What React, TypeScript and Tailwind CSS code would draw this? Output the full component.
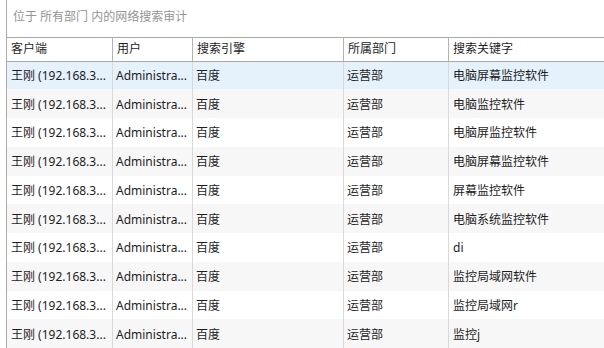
const keywords = [
  "电脑屏幕监控软件",
  "电脑监控软件",
  "电脑屏监控软件",
  "电脑屏幕监控软件",
  "屏幕监控软件",
  "电脑系统监控软件",
  "di",
  "监控局域网软件",
  "监控局域网r",
  "监控j",
];

const App = () => {
  return (
    <div className="w-[604px] h-[348px] overflow-hidden bg-white flex text-[12px] text-[#1e1e1e] font-['Segoe_UI','Noto_Sans','Noto_Sans_CJK_SC',sans-serif]">
      <div className="w-[6px] shrink-0" />
      <div className="flex-1 flex flex-col border-l border-[#ababab]">
        <div className="h-[37px] flex items-center pl-[6px] pb-[2px] text-[#959595]">
          位于 所有部门 内的网络搜索审计
        </div>
        <div className="grid grid-cols-[106px_80px_151px_105px_1fr] h-[25px] border-y border-[#a9a9a9]">
          {["客户端", "用户", "搜索引擎", "所属部门", "搜索关键字"].map((h, i) => (
            <div
              key={h}
              className={`flex items-center pl-[4px] ${i < 4 ? "border-r border-[#b4b4b4]" : ""}`}
            >
              {h}
            </div>
          ))}
        </div>
        {keywords.map((kw, idx) => (
          <div
            key={idx}
            className={`grid grid-cols-[106px_80px_151px_105px_1fr] ${
              idx === 0 ? "h-[28px] bg-[#e5f1fb]" : idx % 2 === 1 ? "h-[29px] bg-[#f7f7f7]" : "h-[29px] bg-white"
            }`}
          >
            <div className="flex items-center pt-[2px] pl-[4px] border-r border-[#d9d9d9] whitespace-nowrap">
              王刚 (192.168.3...
            </div>
            <div className="flex items-center pt-[2px] pl-[3px] border-r border-[#d9d9d9] whitespace-nowrap">
              Administra...
            </div>
            <div className="flex items-center pt-[2px] pl-[3px] border-r border-[#d9d9d9]">百度</div>
            <div className="flex items-center pt-[2px] pl-[3px] border-r border-[#d9d9d9]">运营部</div>
            <div className="flex items-center pt-[2px] pl-[4px]">{kw}</div>
          </div>
        ))}
      </div>
    </div>
  );
};

export default App;
